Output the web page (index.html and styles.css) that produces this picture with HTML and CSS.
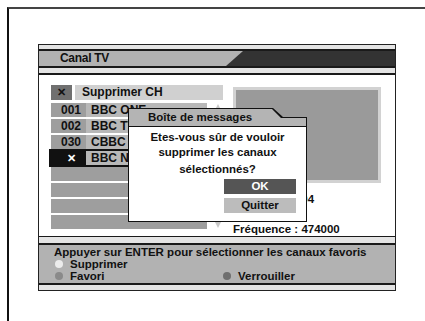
FILE: index.html
```html
<!DOCTYPE html>
<html lang="fr">
<head>
  <meta charset="UTF-8" />
  <title>Canal TV</title>
  <link rel="stylesheet" href="styles.css">
</head>
<body>
  <div class="frame">
    <div class="screen">
      <div class="strip s4"></div>
      <div class="rule"></div>
      <div class="title-bar">
        <span class="title-text">Canal TV</span>
        <span class="title-dark"></span>
      </div>
      <div class="rule"></div>
      <div class="strip s5"></div>
      <div class="rule"></div>

      <div class="content">
        <div class="list">
          <div class="list-head">
            <span class="x-box">✕</span>
            <span class="head-bar">Supprimer CH</span>
          </div>
          <div class="rows">
            <div class="row"><span class="num">001</span><span class="name">BBC ONE</span><span class="arrow up"></span></div>
            <div class="row"><span class="num">002</span><span class="name">BBC TWO</span></div>
            <div class="row"><span class="num">030</span><span class="name">CBBC Channel</span></div>
            <div class="row selected"><span class="num">✕</span><span class="name">BBC NEWS</span></div>
            <div class="row"><span class="empty"></span></div>
            <div class="row"><span class="empty"></span></div>
            <div class="row"><span class="empty"></span></div>
            <div class="row"><span class="empty"></span><span class="arrow down"></span></div>
          </div>
        </div>

        <div class="info">
          <div class="preview"></div>
          <div class="info-line pos">Position : 0004</div>
          <div class="info-line freq">Fréquence : 474000</div>
        </div>

        <div class="dlg">
          <div class="dlg-head">
            <div class="dlg-head-in">Boîte de messages</div>
          </div>
          <div class="dlg-body">
            <p class="dlg-text">Etes-vous sûr de vouloir<br>supprimer les canaux</p>
            <p class="dlg-text last">sélectionnés?</p>
            <div class="dlg-buttons">
              <span class="btn btn-ok">OK</span>
              <span class="btn btn-quit">Quitter</span>
            </div>
          </div>
        </div>
      </div>

      <div class="rule thin"></div>
      <div class="strip s6"></div>
      <div class="rule"></div>
      <div class="footer">
        <div class="f-line">Appuyer sur ENTER pour sélectionner les canaux favoris</div>
        <div class="f-line"><span class="dot light"></span>Supprimer</div>
        <div class="f-line">
          <span class="f-item"><span class="dot"></span>Favori</span>
          <span class="f-item"><span class="dot dark"></span>Verrouiller</span>
        </div>
      </div>
      <div class="rule"></div>
      <div class="strip s5"></div>
    </div>
  </div>
</body>
</html>
```

FILE: styles.css
```css
body {
  margin: 0;
  background: #fff;
  font-family: "Liberation Sans", Arial, sans-serif;
  font-weight: bold;
  color: #111;
  overflow: hidden;
}
.frame {
  margin: 7px 0 0 7px;
  height: 330px;
  border-top: 2px solid #444;
  border-left: 2px solid #111;
  padding: 35px 0 0 29px;
  box-sizing: border-box;
}
.screen {
  width: 358px;
  border: 1px solid #222;
  box-sizing: border-box;
  display: flex;
  flex-direction: column;
}
.strip {
  background: #e4e4e4;
}
.s4 { height: 4px; }
.s5 { height: 5px; }
.s6 { height: 6px; }
.rule {
  height: 2px;
  background: #1a1a1a;
}
.rule.thin {
  height: 1px;
}

/* barre de titre */
.title-bar {
  height: 15px;
  background: #b2b2b2;
  display: flex;
}
.title-text {
  flex: 1;
  padding-left: 21px;
  font-size: 12px;
  line-height: 15px;
  letter-spacing: -0.3px;
}
.title-dark {
  width: 169px;
  background: #333;
  clip-path: polygon(17px 0, 100% 0, 100% 100%, 0 100%);
}

/* zone principale */
.content {
  position: relative;
  height: 161px;
  background: #fff;
  display: flex;
  padding: 10px 0 0 12px;
  box-sizing: border-box;
  font-size: 11.5px;
}
.list {
  width: 172px;
}
.list-head {
  display: flex;
  gap: 3px;
  height: 15px;
  line-height: 15px;
}
.x-box {
  width: 21px;
  background: #707070;
  text-align: center;
  color: #111;
  font-size: 11px;
}
.head-bar {
  flex: 1;
  background: #d0d0d0;
  padding-left: 7px;
  font-size: 12px;
}
.rows {
  margin-top: 3px;
  display: flex;
  flex-direction: column;
  gap: 2px;
}
.row {
  position: relative;
  display: flex;
  width: 156px;
  height: 14px;
  line-height: 14px;
  font-size: 12px;
}
.num {
  width: 35px;
  background: #9e9e9e;
  text-align: right;
  padding-right: 5px;
  box-sizing: border-box;
}
.name {
  flex: 1;
  background: #b8b8b8;
  padding-left: 5px;
  white-space: nowrap;
  overflow: hidden;
}
.empty {
  flex: 1;
  background: #9e9e9e;
}
.row.selected {
  outline: 2px solid #111;
}
.row.selected .num {
  background: #111;
  color: #fff;
  text-align: center;
  padding: 0 0 0 6px;
  font-size: 11px;
}
.arrow {
  position: absolute;
  left: 164px;
  width: 0;
  height: 0;
  border-left: 3px solid transparent;
  border-right: 3px solid transparent;
}
.arrow.up {
  top: 1px;
  border-bottom: 6px solid #c8c8c8;
}
.arrow.down {
  top: 7px;
  border-top: 6px solid #c8c8c8;
}

.info {
  margin-left: 10px;
  padding-top: 2px;
}
.preview {
  width: 148px;
  height: 96px;
  background: #9a9a9a;
  border: 3px solid #d2d2d2;
  box-sizing: border-box;
}
.info-line {
  font-size: 11.5px;
  line-height: 14px;
  white-space: nowrap;
}
.pos {
  margin-top: 9px;
}
.freq {
  margin-top: 16px;
}

/* boîte de dialogue */
.dlg {
  position: absolute;
  left: 89px;
  top: 33px;
  width: 179px;
}
.dlg-head {
  height: 19px;
  padding: 1px;
  box-sizing: border-box;
  background: #111;
  clip-path: polygon(0 0, 145px 0, 155px 9px, 100% 9px, 100% 100%, 0 100%);
}
.dlg-head-in {
  height: 17px;
  background: #b4b4b4;
  clip-path: polygon(0 0, 143px 0, 152px 9px, 100% 9px, 100% 100%, 0 100%);
  padding-left: 19px;
  line-height: 17px;
  font-size: 11.5px;
}
.dlg-body {
  height: 95px;
  background: #fff;
  border: 1px solid #111;
  border-top: none;
  box-sizing: border-box;
  padding-top: 3px;
}
.dlg-text {
  margin: 0;
  text-align: center;
  font-size: 11.5px;
  line-height: 15px;
}
.dlg-text.last {
  margin-top: 2px;
}
.dlg-buttons {
  margin-top: 2px;
  display: flex;
  flex-direction: column;
  align-items: flex-end;
  gap: 4px;
  padding-right: 10px;
}
.btn {
  width: 72px;
  height: 15px;
  line-height: 15px;
  text-align: center;
  font-size: 11.5px;
}
.btn-ok {
  background: #555;
  color: #fff;
}
.btn-quit {
  background: #bcbcbc;
}

/* pied */
.footer {
  height: 38px;
  background: #b2b2b2;
  padding: 1px 0 0 15px;
  box-sizing: border-box;
  font-size: 11.5px;
}
.f-line {
  display: flex;
  align-items: center;
  height: 12px;
  line-height: 12px;
  white-space: nowrap;
}
.f-item {
  display: flex;
  align-items: center;
}
.f-item:first-child {
  width: 168px;
}
.dot {
  width: 8px;
  height: 8px;
  border-radius: 50%;
  background: #8a8a8a;
  margin: 0 7px 0 1px;
}
.dot.light {
  background: #ececec;
}
.dot.dark {
  background: #6e6e6e;
}
```
